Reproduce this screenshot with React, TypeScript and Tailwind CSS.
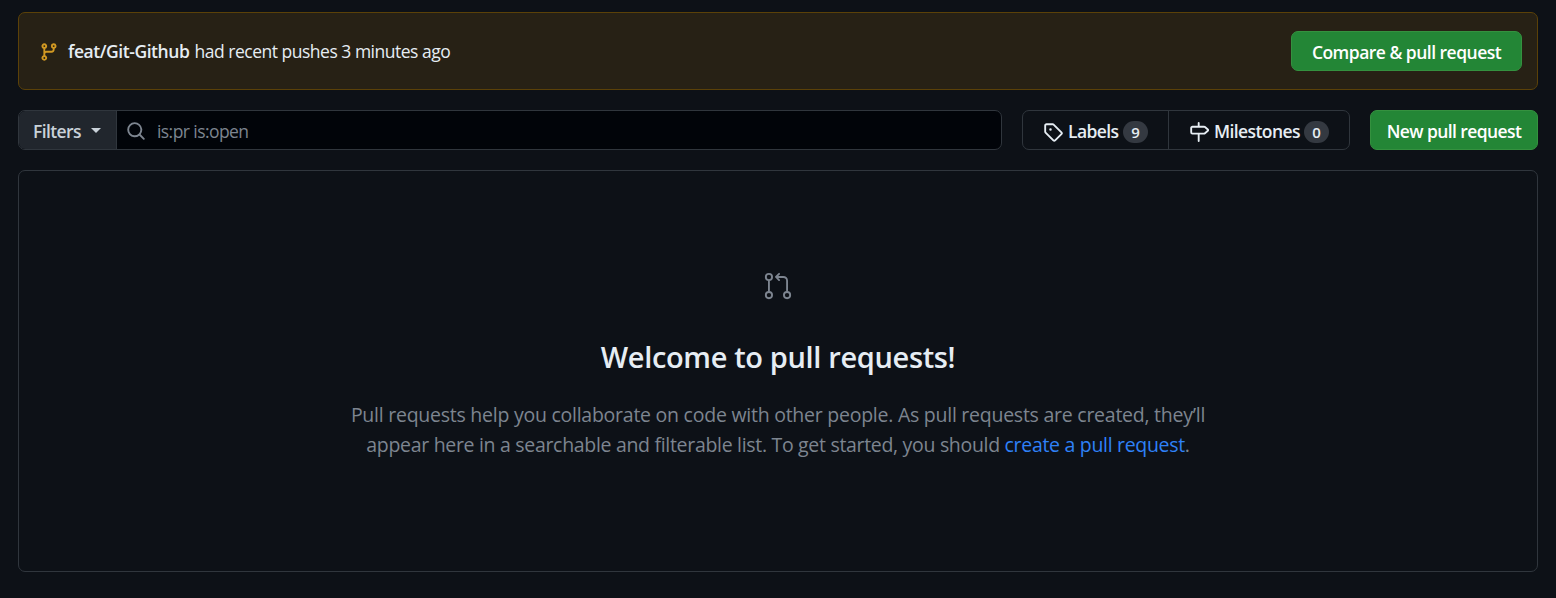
import { GoGitPullRequest } from "react-icons/go";

const paths = {
  branch:
    "M9.5 3.25a2.25 2.25 0 1 1 3 2.122V6A2.5 2.5 0 0 1 10 8.5H6a1 1 0 0 0-1 1v1.128a2.251 2.251 0 1 1-1.5 0V5.372a2.25 2.25 0 1 1 1.5 0v1.836A2.493 2.493 0 0 1 6 7h4a1 1 0 0 0 1-1v-.628A2.25 2.25 0 0 1 9.5 3.25Zm-6 0a.75.75 0 1 0 1.5 0 .75.75 0 0 0-1.5 0Zm8.25-.75a.75.75 0 1 0 0 1.5.75.75 0 0 0 0-1.5ZM4.25 12a.75.75 0 1 0 0 1.5.75.75 0 0 0 0-1.5Z",
  search:
    "M10.68 11.74a6 6 0 0 1-7.922-8.982 6 6 0 0 1 8.982 7.922l3.04 3.04a.749.749 0 0 1-.326 1.275.749.749 0 0 1-.734-.215ZM11.5 7a4.499 4.499 0 1 0-8.997 0A4.499 4.499 0 0 0 11.5 7Z",
  tag: "M1 7.775V2.75C1 1.784 1.784 1 2.75 1h5.025c.464 0 .91.184 1.238.513l6.25 6.25a1.75 1.75 0 0 1 0 2.474l-5.026 5.026a1.75 1.75 0 0 1-2.474 0l-6.25-6.25A1.752 1.752 0 0 1 1 7.775Zm1.5 0c0 .066.026.13.073.177l6.25 6.25a.25.25 0 0 0 .354 0l5.025-5.025a.25.25 0 0 0 0-.354l-6.25-6.25a.25.25 0 0 0-.177-.073H2.75a.25.25 0 0 0-.25.25ZM6 5a1 1 0 1 1 0 2 1 1 0 0 1 0-2Z",
  milestone:
    "M7.75 0a.75.75 0 0 1 .75.75V3h3.634c.414 0 .814.147 1.13.414l2.07 1.75a1.75 1.75 0 0 1 0 2.672l-2.07 1.75a1.75 1.75 0 0 1-1.13.414H8.5v5.25a.75.75 0 0 1-1.5 0V10H2.75A1.75 1.75 0 0 1 1 8.25v-3.5C1 3.784 1.784 3 2.75 3H7V.75A.75.75 0 0 1 7.75 0Zm4.384 8.5a.25.25 0 0 0 .161-.06l2.07-1.75a.248.248 0 0 0 0-.38l-2.07-1.75a.25.25 0 0 0-.161-.06H2.75a.25.25 0 0 0-.25.25v3.5c0 .138.112.25.25.25h9.384Z",
};

function Icon({ name, className = "" }: { name: keyof typeof paths; className?: string }) {
  return (
    <svg viewBox="0 0 16 16" fill="currentColor" aria-hidden="true" className={`size-5 shrink-0 ${className}`}>
      <path d={paths[name]} />
    </svg>
  );
}

function Counter({ value }: { value: number }) {
  return (
    <span className="flex h-[22px] w-[25px] items-center justify-center rounded-full bg-[#343941] pt-px text-[15px] font-semibold">
      {value}
    </span>
  );
}

export default function App() {
  return (
    <main className="h-[598px] overflow-hidden bg-[#0d1117] px-[18px] pt-3 font-['Open_Sans','Noto_Sans',sans-serif] text-[17.5px] whitespace-nowrap text-[#e6edf3]">
      <section className="flex h-[78px] items-center rounded-[7px] border border-[#5b4108] bg-[#272115] pr-[15px] pl-5">
        <Icon name="branch" className="mt-px text-[#d29922]" />
        <p className="ml-[9px] flex">
          <strong className="w-[126.5px] font-semibold tracking-[-0.45px]">feat/Git-Github</strong>
          <span className="tracking-[-0.49px]">had recent pushes 3 minutes ago</span>
        </p>
        <button className="ml-auto flex h-10 w-[231px] items-center justify-center rounded-[7px] border border-[#34913f] bg-[#238636] pt-[3px] font-semibold tracking-[-0.52px] text-white">
          Compare &amp; pull request
        </button>
      </section>

      <div className="mt-5 flex h-10">
        <div className="flex w-[984px] overflow-hidden rounded-[7px] border border-[#30363d] bg-[#010409]">
          <button className="flex w-[98px] items-center border-r border-[#30363d] bg-[#21262d] pl-[14px] font-semibold tracking-[-0.6px] text-[#c9d1d9]">
            <span className="w-[58px] pt-[3px] text-left">Filters</span>
            <span className="mt-px border-x-5 border-t-5 border-x-transparent border-t-[#c9d1d9]" />
          </button>
          <div className="flex items-center pl-[9px] text-[#7d8590]">
            <Icon name="search" className="mt-px" />
            <span className="ml-[11px] pt-[3px] tracking-[-0.57px]">is:pr is:open</span>
          </div>
        </div>
        <nav className="ml-5 flex w-[328px] rounded-[7px] border border-[#30363d] font-semibold">
          <a className="flex w-[146px] items-center border-r border-[#30363d] pt-[3px] pl-5">
            <Icon name="tag" />
            <span className="ml-[5px] w-[55px] tracking-[-0.6px]">Labels</span>
            <Counter value={9} />
          </a>
          <a className="flex items-center pt-[3px] pl-5">
            <Icon name="milestone" />
            <span className="ml-[5px] w-[90px] tracking-[-0.6px]">Milestones</span>
            <Counter value={0} />
          </a>
        </nav>
        <button className="ml-5 flex w-[168px] items-center justify-center rounded-[7px] border border-[#34913f] bg-[#238636] pt-[3px] font-semibold tracking-[-0.6px] text-white">
          New pull request
        </button>
      </div>

      <section className="mt-5 flex h-[402px] flex-col items-center rounded-[7px] border border-[#30363d] pt-[100px]">
        <GoGitPullRequest className="size-[30px] text-[#7d8590]" />
        <h2 className="mt-[33px] text-[29px] leading-[45px] font-semibold tracking-[-0.35px]">
          Welcome to pull requests!
        </h2>
        <p className="mt-[21px] text-center text-[19.5px] leading-[30px] text-[#7d8590]">
          <span className="block tracking-[-0.25px]">
            Pull requests help you collaborate on code with other people. As pull requests are created, they’ll
          </span>
          <span className="block tracking-[-0.31px]">
            appear here in a searchable and filterable list. To get started, you should{" "}
            <a className="text-[#2f81f7]">create a pull request</a>.
          </span>
        </p>
      </section>
    </main>
  );
}
